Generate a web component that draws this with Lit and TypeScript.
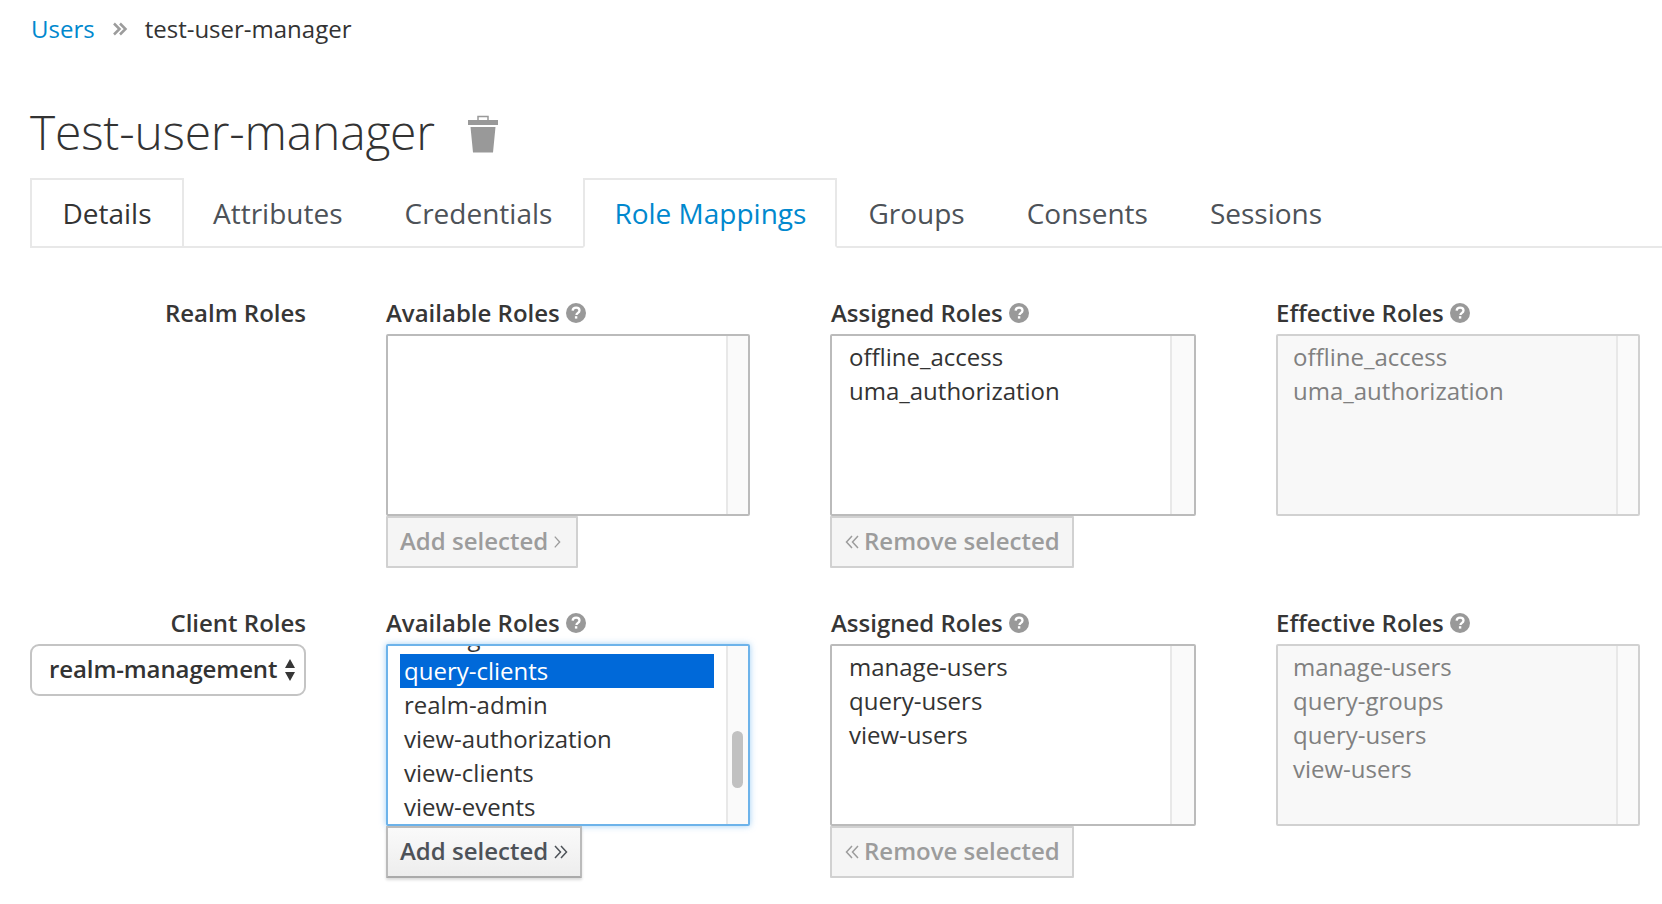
import { LitElement, html, css } from "lit";
import { customElement } from "lit/decorators.js";

const help = html`<svg class="help" viewBox="0 0 20 20"><circle cx="10" cy="10" r="10" fill="#999"/><path d="M6.6 7.6c.2-2 1.6-3 3.5-3 2 0 3.4 1.2 3.4 2.8 0 1.300-.8 2-1.800 2.700-.8.600-1.200 1-1.200 1.900" fill="none" stroke="#fff" stroke-width="2.300"/><rect x="8.900" y="13.200" width="2.400" height="2.400" fill="#fff"/></svg>`;

const chevL = html`<svg class="chev" viewBox="0 0 14 16"><path d="M7 2 1.500 8 7 14M13 2 7.500 8 13 14" fill="none" stroke="currentColor" stroke-width="1.500"/></svg>`;
const chevR = (double: boolean) =>
  html`<svg class="chev ${double ? "" : "single"}" viewBox="${double ? "0 0 14 16" : "2 0 9 16"}"><path d="${double ? "M1 2 6.500 8 1 14M7 2 12.500 8 7 14" : "M4 2 9.500 8 4 14"}" fill="none" stroke="currentColor" stroke-width="1.500"/></svg>`;

@customElement("role-box")
class RoleBox extends LitElement {
  static properties = {
    title: { type: String },
    items: { type: Array },
    variant: { type: String },
    selected: { type: String },
    scrolled: { type: Boolean },
  };
  declare title: string;
  declare items: string[];
  declare variant: string;
  declare selected: string;
  declare scrolled: boolean;

  static styles = css`
    :host { display: block; font-family: "Open Sans", sans-serif; }
    .label { display: flex; align-items: center; gap: 6px; height: 34px; margin-bottom: 4px; font-size: 24px; line-height: 32px; font-weight: 600; color: #363636; }
    .label.assigned { padding-left: 1px; }
    .help { width: 20px; height: 20px; flex: none; }
    .box { box-sizing: border-box; height: 182px; border: 2px solid #bbb; border-radius: 2px; display: flex; background: #fff; overflow: hidden; }
    .box.focus { border-color: #6db3ea; box-shadow: 0 0 6px rgba(80,165,235,.55); }
    .box.ro { background: #f8f8f8; border-color: #d1d1d1; }
    .list { flex: 1; min-width: 0; padding: 4px 12px 0; font-size: 24px; line-height: 34px; color: #333; overflow: hidden; }
    .list.scrolled { padding-top: 0; }
    .ro .list { color: #808080; padding-left: 11px; }
    .assigned .list { padding-left: 13px; }
    .opt { padding: 0 4px; white-space: nowrap; }
    .first { margin-top: -26px; }
    .opt.sel { background: #0069d9; color: #fff; }
    .track { flex: none; width: 22px; box-sizing: border-box; background: #fafafa; border-left: 2px solid #e8e8e8; }
    .assigned .track { width: 24px; }
    .thumb { width: 11px; height: 57px; border-radius: 6px; background: #c1c1c1; margin: 85px 0 0 4px; }
  `;

  render() {
    const v = this.variant ?? "";
    return html`
      <div class="label ${v}"><span>${this.title}</span>${help}</div>
      <div class="box ${v} ${this.scrolled ? "focus" : ""}">
        <div class="list ${this.scrolled ? "scrolled" : ""}">
          ${this.items.map(
            (it, i) => html`<div class="opt ${it === this.selected ? "sel" : ""} ${this.scrolled && i === 0 ? "first" : ""}">${it}</div>`
          )}
        </div>
        <div class="track">${this.scrolled ? html`<div class="thumb"></div>` : ""}</div>
      </div>
      <slot></slot>
    `;
  }
}

@customElement("app-root")
class AppRoot extends LitElement {
  static styles = css`
    :host { display: block; box-sizing: border-box; width: 1662px; height: 904px; overflow: hidden; background: #fff; font-family: "Open Sans", sans-serif; color: #363636; }
    .crumbs { display: flex; align-items: center; height: 34px; margin-top: 11px; padding-left: 31px; font-size: 24px; color: #333; }
    .crumbs a { color: #0088ce; }
    .sep { width: 16px; height: 16px; margin: 2px 17px 0 17px; color: #9c9c9c; }
    .title { display: flex; align-items: center; height: 74px; margin-top: 49px; padding-left: 30px; font-size: 48px; font-weight: 300; color: #333; letter-spacing: -0.2px; }
    .trash { width: 32px; height: 38px; margin: 5px 0 0 32px; }
    .tabs { display: flex; height: 70px; box-sizing: border-box; margin-top: 10px; margin-left: 30px; border-bottom: 2px solid #e8e8e8; font-size: 28px; color: #4d5258; }
    .tab { box-sizing: border-box; height: 70px; padding: 0 31px; display: flex; align-items: center; }
    .tab.attrs { padding-left: 29px; }
    .tab.details { color: #333; width: 154px; padding: 0; justify-content: center; border: 2px solid #e8e8e8; }
    .tab.active { color: #0088ce; width: 254px; padding: 0; justify-content: center; border: 2px solid #e8e8e8; border-bottom: 2px solid #fff; }
    .grid { display: grid; grid-template-columns: 276px 364px 366px 364px; column-gap: 80px; margin: 0 0 0 30px; }
    .row1 { margin-top: 48px; }
    .row2 { margin-top: 38px; }
    .rolelabel { font-size: 24px; font-weight: 600; color: #363636; text-align: right; height: 34px; line-height: 34px; margin-bottom: 4px; }
    .select { box-sizing: border-box; height: 52px; border: 2px solid #c4c4c4; border-radius: 9px; display: flex; align-items: center; justify-content: space-between; padding: 0 8px 3px 17px; font-size: 24px; font-weight: 600; color: #333; background: #fff; letter-spacing: -0.1px; }
    .updown { width: 12px; height: 28px; flex: none; margin-top: 3px; }
    .btn { display: flex; width: fit-content; align-items: center; gap: 5px; box-sizing: border-box; height: 52px; padding: 0 12px 4px; border: 2px solid #d1d1d1; background: #f5f5f5; color: #9c9c9c; font-size: 24px; font-weight: 600; border-radius: 1px; }
    .btn.add { padding-right: 15px; }
    .btn.remove { padding-left: 13px; gap: 5px; }
    .btn.on { border-color: #bbb; border-bottom-color: #aaa; background: linear-gradient(#fafafa,#ededed); color: #4d5258; box-shadow: 0 2px 3px rgba(3,3,3,.15); gap: 6px; }
    .chev { width: 14px; height: 16px; flex: none; margin-top: 4px; }
    .chev.single { width: 8px; }
  `;

  render() {
    return html`
      <div class="crumbs"><a>Users</a>
        <svg class="sep" viewBox="0 0 16 16"><path d="M2 2.500 7.500 8 2 13.500M8 2.500 13.500 8 8 13.500" fill="none" stroke="currentColor" stroke-width="2.500"/></svg>
        <span>test-user-manager</span></div>
      <div class="title"><span>Test-user-manager</span>
        <svg class="trash" viewBox="0 0 32 38"><path d="M11 5V1.500h10V5" fill="none" stroke="#999" stroke-width="1.500"/><path d="M1 5h30v5H1zM3.500 12h25l-2.500 25.500H6z" fill="#999"/></svg></div>
      <div class="tabs">
        <div class="tab details">Details</div>
        <div class="tab attrs">Attributes</div>
        <div class="tab">Credentials</div>
        <div class="tab active">Role Mappings</div>
        <div class="tab">Groups</div>
        <div class="tab">Consents</div>
        <div class="tab">Sessions</div>
      </div>

      <div class="grid row1">
        <div class="rolelabel">Realm Roles</div>
        <role-box title="Available Roles" .items=${[]}><div class="btn add">Add selected ${chevR(false)}</div></role-box>
        <role-box title="Assigned Roles" variant="assigned" .items=${["offline_access", "uma_authorization"]}><div class="btn remove">${chevL} Remove selected</div></role-box>
        <role-box title="Effective Roles" variant="ro" .items=${["offline_access", "uma_authorization"]}></role-box>
      </div>

      <div class="grid row2">
        <div>
          <div class="rolelabel">Client Roles</div>
          <div class="select"><span>realm-management</span>
            <svg class="updown" viewBox="0 0 12 28"><path d="M6 3 11 12H1zM6 25 1 16h10z" fill="#363636"/></svg></div>
        </div>
        <role-box title="Available Roles" scrolled selected="query-clients" .items=${["manage-realm", "query-clients", "realm-admin", "view-authorization", "view-clients", "view-events"]}><div class="btn on">Add selected ${chevR(true)}</div></role-box>
        <role-box title="Assigned Roles" variant="assigned" .items=${["manage-users", "query-users", "view-users"]}><div class="btn remove">${chevL} Remove selected</div></role-box>
        <role-box title="Effective Roles" variant="ro" .items=${["manage-users", "query-groups", "query-users", "view-users"]}></role-box>
      </div>
    `;
  }
}
